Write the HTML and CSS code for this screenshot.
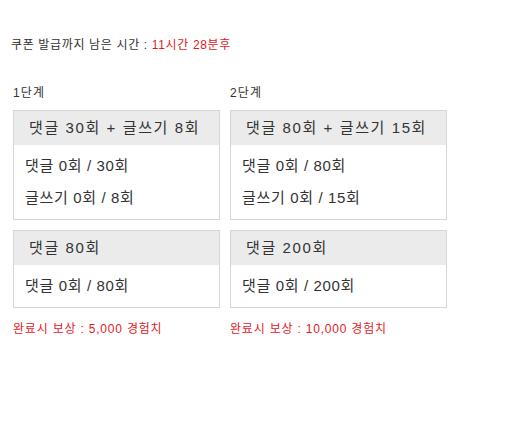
FILE: index.html
```html
<!DOCTYPE html>
<html lang="ko">
<head>
    <meta charset="UTF-8">
    <meta name="viewport" content="width=device-width, initial-scale=1.0">
    <title>쿠폰 미션</title>
    <link rel="stylesheet" href="styles.css">
</head>
<body>
    <div class="page">
        <p class="timer">쿠폰 발급까지 남은 시간 : <span class="red">11시간 28분후</span></p>

        <div class="steps">
            <!-- 1단계 -->
            <div class="step step-1">
                <div class="step-title">1단계</div>
                <div class="mission">
                    <div class="mission-head">댓글 30회 + 글쓰기 8회</div>
                    <div class="mission-body">
                        <p>댓글 0회 / 30회</p>
                        <p>글쓰기 0회 / 8회</p>
                    </div>
                </div>
                <div class="mission">
                    <div class="mission-head">댓글 80회</div>
                    <div class="mission-body">
                        <p>댓글 0회 / 80회</p>
                    </div>
                </div>
                <p class="reward">완료시 보상 : 5,000 경험치</p>
            </div>

            <!-- 2단계 -->
            <div class="step step-2">
                <div class="step-title">2단계</div>
                <div class="mission">
                    <div class="mission-head">댓글 80회 + 글쓰기 15회</div>
                    <div class="mission-body">
                        <p>댓글 0회 / 80회</p>
                        <p>글쓰기 0회 / 15회</p>
                    </div>
                </div>
                <div class="mission">
                    <div class="mission-head">댓글 200회</div>
                    <div class="mission-body">
                        <p>댓글 0회 / 200회</p>
                    </div>
                </div>
                <p class="reward">완료시 보상 : 10,000 경험치</p>
            </div>
        </div>
    </div>
</body>
</html>
```

FILE: styles.css
```css
body {
    margin: 0;
    background: #fff;
    color: #333;
    font-family: 'Liberation Sans', 'Noto Sans CJK KR', sans-serif;
}

.page {
    padding: 37px 0 0 13px;
}

.timer {
    margin: 0 0 32px -2px;
    font-size: 12px;
    line-height: 16px;
    letter-spacing: 0.65px;
}

.red {
    color: #e4181e;
}

.steps {
    display: grid;
    grid-template-columns: 207px 217px;
    column-gap: 10px;
}

.step-title {
    font-size: 12px;
    line-height: 16px;
    letter-spacing: 1.2px;
    margin-bottom: 9px;
}

.mission {
    border: 1px solid #d6d6d6;
    margin-bottom: 10px;
}

.mission:last-of-type {
    margin-bottom: 0;
}

.mission-head {
    height: 34px;
    line-height: 34px;
    padding-left: 15px;
    background: #ebebeb;
    font-size: 15px;
    letter-spacing: 1.6px;
}

.mission-body {
    padding: 5px 11px;
}

.mission-body p {
    margin: 0;
    font-size: 15px;
    line-height: 32px;
    letter-spacing: 0.65px;
}

.reward {
    margin: 13px 0 0;
    font-size: 12px;
    line-height: 16px;
    letter-spacing: 0.8px;
    color: #e4181e;
}
```
